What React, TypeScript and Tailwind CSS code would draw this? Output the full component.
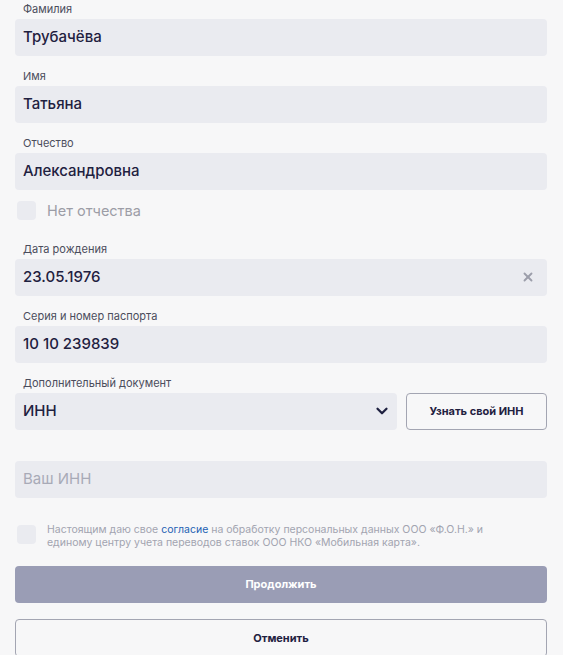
import { ChevronDown, X } from "lucide-react";

const font = { fontFamily: "Inter, 'Noto Sans', sans-serif" };

function Field({ label, value, right }: { label: string; value: string; right?: React.ReactNode }) {
  return (
    <div className="flex flex-col">
      <span className="pl-[8px] text-[11px] leading-[13px] text-[#4b4d5c]">{label}</span>
      <div className="mt-[3px] flex h-[37px] items-center justify-between rounded-[4px] bg-[#eaebf0] pl-[8px] pr-[12px]">
        <span className="text-[15px] font-medium text-[#1f2140]">{value}</span>
        {right}
      </div>
    </div>
  );
}

export default function App() {
  return (
    <div className="min-h-[655px] w-[563px] overflow-hidden bg-[#f7f7f8]" style={font}>
      <div className="flex flex-col gap-[14px] pl-[15px] pr-[16px] pt-[3px]">
        <Field label="Фамилия" value="Трубачёва" />
        <Field label="Имя" value="Татьяна" />
        <div className="flex flex-col">
          <Field label="Отчество" value="Александровна" />
          <label className="mt-[10px] flex items-center gap-[11px] pl-[2px]">
            <span className="h-[19px] w-[19px] rounded-[4px] bg-[#eaebf0]" />
            <span className="text-[14.5px] text-[#9c9da6]">Нет отчества</span>
          </label>
        </div>
        <div className="mt-[7px]">
          <Field
            label="Дата рождения"
            value="23.05.1976"
            right={<X size={14} strokeWidth={3.2} className="text-[#9c9eaa]" />}
          />
        </div>
        <Field label="Серия и номер паспорта" value="10 10 239839" />
        <div className="flex flex-col">
          <span className="pl-[8px] text-[11px] leading-[13px] text-[#4b4d5c]">Дополнительный документ</span>
          <div className="mt-[3px] flex gap-[9px]">
            <div className="flex h-[37px] flex-1 items-center justify-between rounded-[4px] bg-[#eaebf0] pl-[8px] pr-[6px]">
              <span className="text-[15px] font-medium text-[#1f2140]">ИНН</span>
              <ChevronDown size={18} strokeWidth={3} className="text-[#1f2140]" />
            </div>
            <button className="h-[37px] w-[141px] rounded-[4px] border border-[#a3a5b2] text-[11px] font-bold text-[#1f2140]">
              Узнать свой ИНН
            </button>
          </div>
        </div>
        <div className="mt-[17px] flex h-[37px] items-center rounded-[4px] bg-[#eaebf0] pl-[8px]">
          <span className="text-[15px] text-[#a8aab7]">Ваш ИНН</span>
        </div>
        <div className="mt-[11px] flex gap-[11px] pl-[2px]">
          <span className="mt-[2px] h-[19px] w-[19px] shrink-0 rounded-[4px] bg-[#eaebf0]" />
          <p className="text-[10.5px] leading-[13px] text-[#a2a4b0]">
            Настоящим даю свое <span className="text-[#1d5fb3]">согласие</span> на обработку персональных данных ООО «Ф.О.Н.» и
            <br />
            единому центру учета переводов ставок ООО НКО «Мобильная карта».
          </p>
        </div>
        <button className="mt-[3px] h-[37px] rounded-[4px] bg-[#9a9db5] text-[11px] font-bold text-white">
          Продолжить
        </button>
        <button className="mt-[2px] h-[38px] rounded-[4px] border border-[#a3a5b2] text-[11px] font-bold text-[#1f2140]">
          Отменить
        </button>
      </div>
    </div>
  );
}
